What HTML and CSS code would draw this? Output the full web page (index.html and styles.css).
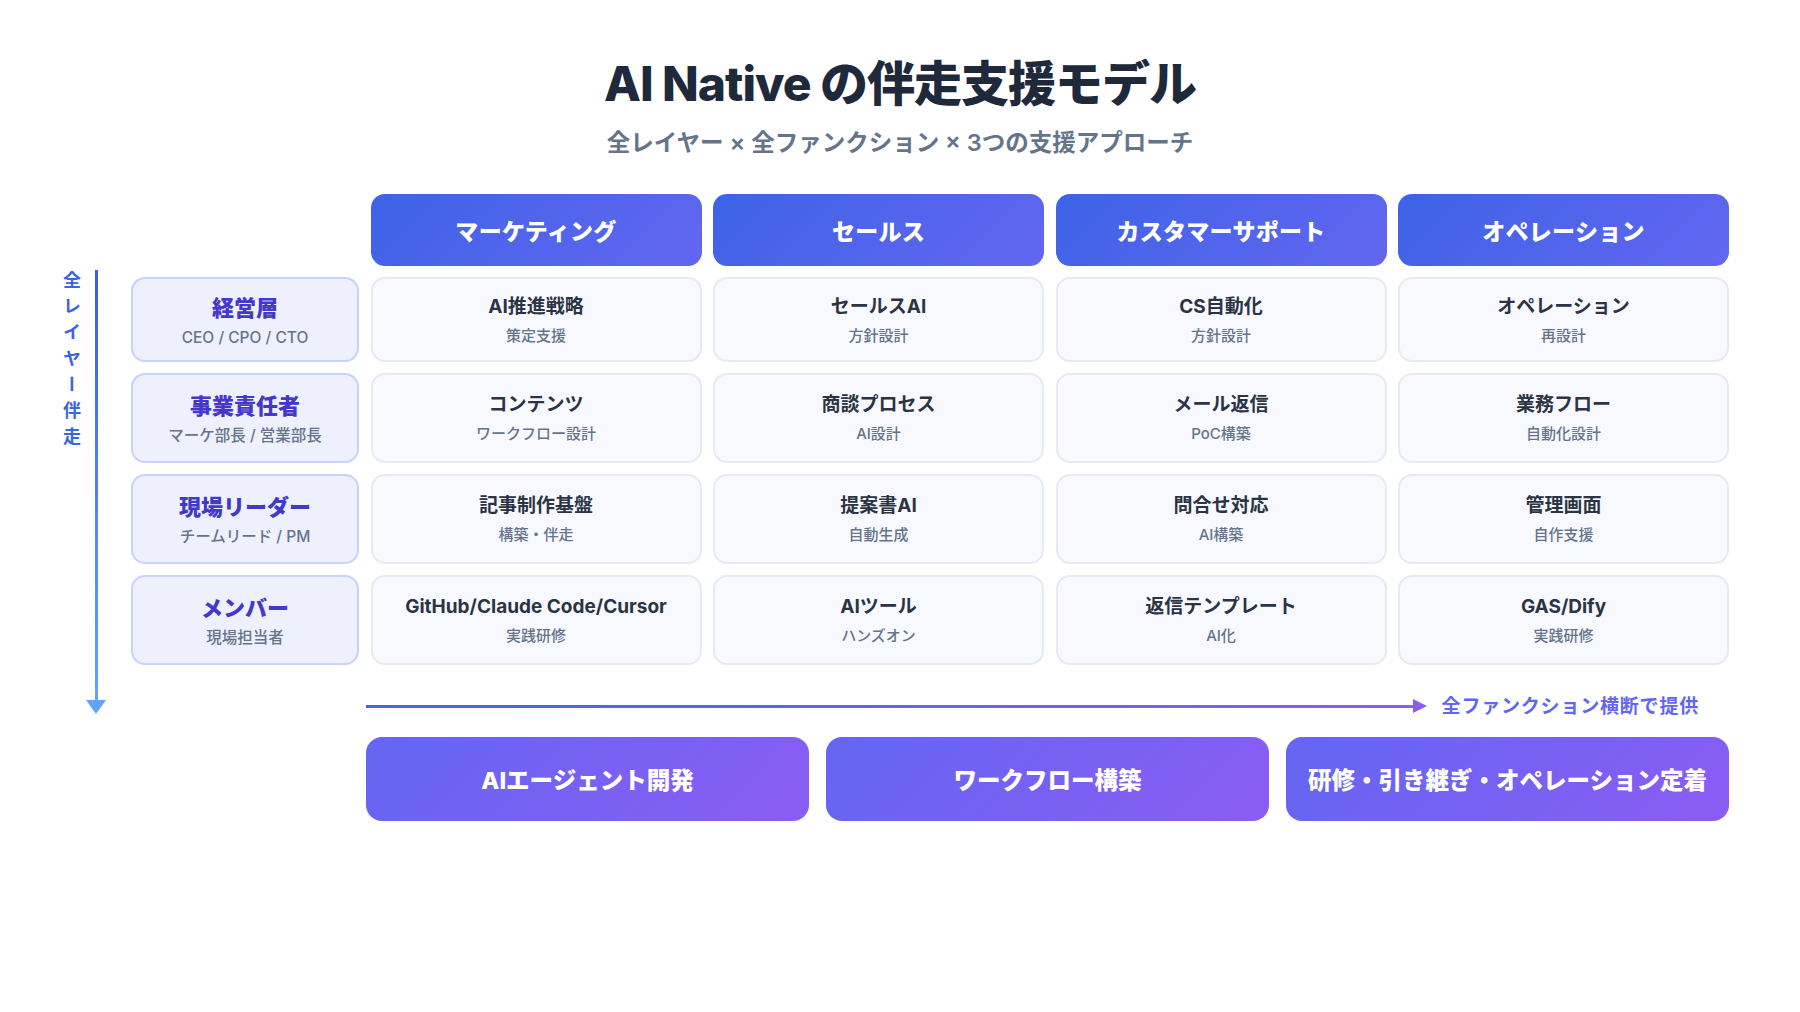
FILE: index.html
```html
<!DOCTYPE html>
<html lang="ja">
<head>
<meta charset="utf-8">
<title>AI Native の伴走支援モデル</title>
<link rel="stylesheet" href="styles.css">
</head>
<body>
<div class="page">
  <header class="title-block">
    <h1 class="title">AI Native の伴走支援モデル</h1>
    <p class="subtitle">全レイヤー × 全ファンクション × 3つの支援アプローチ</p>
  </header>

  <div class="board">
    <div class="corner"></div>
    <div class="col-head">マーケティング</div>
    <div class="col-head">セールス</div>
    <div class="col-head">カスタマーサポート</div>
    <div class="col-head">オペレーション</div>

    <div class="side">
      <div class="side-label">全レイヤー伴走</div>
      <div class="side-arrow">
        <div class="v-line"></div>
        <div class="v-head"></div>
      </div>
    </div>

    <div class="row-head"><div class="rh-main">経営層</div><div class="rh-sub">CEO / CPO / CTO</div></div>
    <div class="cell"><div class="c-main">AI推進戦略</div><div class="c-sub">策定支援</div></div>
    <div class="cell"><div class="c-main">セールスAI</div><div class="c-sub">方針設計</div></div>
    <div class="cell"><div class="c-main">CS自動化</div><div class="c-sub">方針設計</div></div>
    <div class="cell"><div class="c-main">オペレーション</div><div class="c-sub">再設計</div></div>

    <div class="row-head"><div class="rh-main">事業責任者</div><div class="rh-sub">マーケ部長 / 営業部長</div></div>
    <div class="cell"><div class="c-main">コンテンツ</div><div class="c-sub">ワークフロー設計</div></div>
    <div class="cell"><div class="c-main">商談プロセス</div><div class="c-sub">AI設計</div></div>
    <div class="cell"><div class="c-main">メール返信</div><div class="c-sub">PoC構築</div></div>
    <div class="cell"><div class="c-main">業務フロー</div><div class="c-sub">自動化設計</div></div>

    <div class="row-head"><div class="rh-main">現場リーダー</div><div class="rh-sub">チームリード / PM</div></div>
    <div class="cell"><div class="c-main">記事制作基盤</div><div class="c-sub">構築・伴走</div></div>
    <div class="cell"><div class="c-main">提案書AI</div><div class="c-sub">自動生成</div></div>
    <div class="cell"><div class="c-main">問合せ対応</div><div class="c-sub">AI構築</div></div>
    <div class="cell"><div class="c-main">管理画面</div><div class="c-sub">自作支援</div></div>

    <div class="row-head"><div class="rh-main">メンバー</div><div class="rh-sub">現場担当者</div></div>
    <div class="cell"><div class="c-main">GitHub/Claude Code/Cursor</div><div class="c-sub">実践研修</div></div>
    <div class="cell"><div class="c-main">AIツール</div><div class="c-sub">ハンズオン</div></div>
    <div class="cell"><div class="c-main">返信テンプレート</div><div class="c-sub">AI化</div></div>
    <div class="cell"><div class="c-main">GAS/Dify</div><div class="c-sub">実践研修</div></div>

    <div class="h-flow">
      <div class="h-arrow">
        <div class="h-line"></div>
        <div class="h-head"></div>
      </div>
      <div class="h-label">全ファンクション横断で提供</div>
    </div>

    <div class="approaches">
      <div class="approach">AIエージェント開発</div>
      <div class="approach">ワークフロー構築</div>
      <div class="approach">研修・引き継ぎ・オペレーション定着</div>
    </div>
  </div>
</div>
</body>
</html>
```

FILE: styles.css
```css
* { box-sizing: border-box; }

html, body {
  margin: 0;
  padding: 0;
  background: #ffffff;
}

body {
  font-family: Inter, "Noto Sans CJK JP", "Noto Sans", sans-serif;
  color: #1e293b;
}

.page {
  width: 1680px;
  margin: 0 auto;
  padding-top: 55px;
}

.title-block {
  text-align: center;
}

.title {
  margin: 0;
  font-size: 48px;
  line-height: 58px;
  font-weight: 800;
  color: #1e293b;
  letter-spacing: -1px;
}

.subtitle {
  margin: 14px 0 0;
  font-size: 23.5px;
  line-height: 32px;
  font-weight: 600;
  color: #64748b;
}

.board {
  margin-top: 35px;
  display: grid;
  grid-template-columns: 59.5px 228px repeat(4, 331px);
  grid-template-rows: 72px 85px 90px 90px 90px 50px 84px;
  column-gap: 11.5px;
  row-gap: 11px;
}

.corner { grid-column: 1 / span 2; grid-row: 1; }

/* vertical side label + arrow */
.side {
  grid-column: 1;
  grid-row: 2 / span 5;
  margin-top: -7px;
  margin-bottom: 12px;
  display: flex;
  gap: 6px;
}

.side-label {
  width: 20px;
  writing-mode: vertical-rl;
  text-orientation: upright;
  font-size: 18px;
  line-height: 20px;
  letter-spacing: 8px;
  font-weight: 700;
  color: #3b63e6;
  padding-top: 1px;
}

.side-arrow {
  width: 20px;
  display: flex;
  flex-direction: column;
  align-items: center;
}

.v-line {
  flex: 1;
  width: 3px;
  background: linear-gradient(180deg, #3b5fe3 0%, #60a5fa 100%);
}

.v-head {
  width: 0;
  height: 0;
  border-left: 10px solid transparent;
  border-right: 10px solid transparent;
  border-top: 14px solid #60a5fa;
}

.col-head {
  grid-row: 1;
  border-radius: 14px;
  background: linear-gradient(135deg, #3d63e6 0%, #6366f1 100%);
  color: #ffffff;
  font-size: 23px;
  font-weight: 800;
  display: flex;
  align-items: center;
  justify-content: center;
  letter-spacing: 0.3px;
}

.row-head {
  grid-column: 2;
  border: 2px solid #c7d2fe;
  background: #eef0fd;
  border-radius: 14px;
  display: flex;
  flex-direction: column;
  align-items: center;
  justify-content: center;
  padding-top: 3px;
}

.rh-main {
  font-size: 22px;
  line-height: 28px;
  font-weight: 800;
  color: #4338ca;
}

.rh-sub {
  margin-top: 5px;
  font-size: 15.5px;
  line-height: 22px;
  font-weight: 500;
  color: #64748b;
}

.cell {
  border: 2px solid #e6eaf2;
  background: #f8f9fe;
  border-radius: 14px;
  display: flex;
  flex-direction: column;
  align-items: center;
  justify-content: center;
}

.c-main {
  font-size: 19px;
  line-height: 26px;
  font-weight: 700;
  color: #2a3444;
}

.c-sub {
  margin-top: 6px;
  font-size: 15px;
  line-height: 20px;
  font-weight: 500;
  color: #64748b;
}

/* horizontal flow */
.h-flow {
  grid-column: 3 / span 4;
  grid-row: 6;
  margin-left: -4.5px;
  padding-right: 30px;
  padding-top: 17px;
  display: flex;
  align-items: flex-start;
  gap: 15px;
}

.h-arrow {
  flex: 1;
  height: 26px;
  display: flex;
  align-items: center;
}

.h-line {
  flex: 1;
  height: 3px;
  background: linear-gradient(90deg, #4169e1 0%, #8b5cf6 100%);
}

.h-head {
  width: 0;
  height: 0;
  border-top: 7px solid transparent;
  border-bottom: 7px solid transparent;
  border-left: 14px solid #8b5cf6;
}

.h-label {
  font-size: 19px;
  line-height: 26px;
  font-weight: 700;
  color: #6366f1;
  letter-spacing: 0.8px;
  padding-top: 1px;
}

/* approaches */
.approaches {
  grid-column: 3 / span 4;
  grid-row: 7;
  margin-left: -4.5px;
  display: grid;
  grid-template-columns: repeat(3, 1fr);
  gap: 17px;
}

.approach {
  height: 84px;
  border-radius: 16px;
  background: linear-gradient(135deg, #6366f1 0%, #8b5cf6 100%);
  color: #ffffff;
  font-size: 23.5px;
  font-weight: 800;
  display: flex;
  align-items: center;
  justify-content: center;
  white-space: nowrap;
}
```
